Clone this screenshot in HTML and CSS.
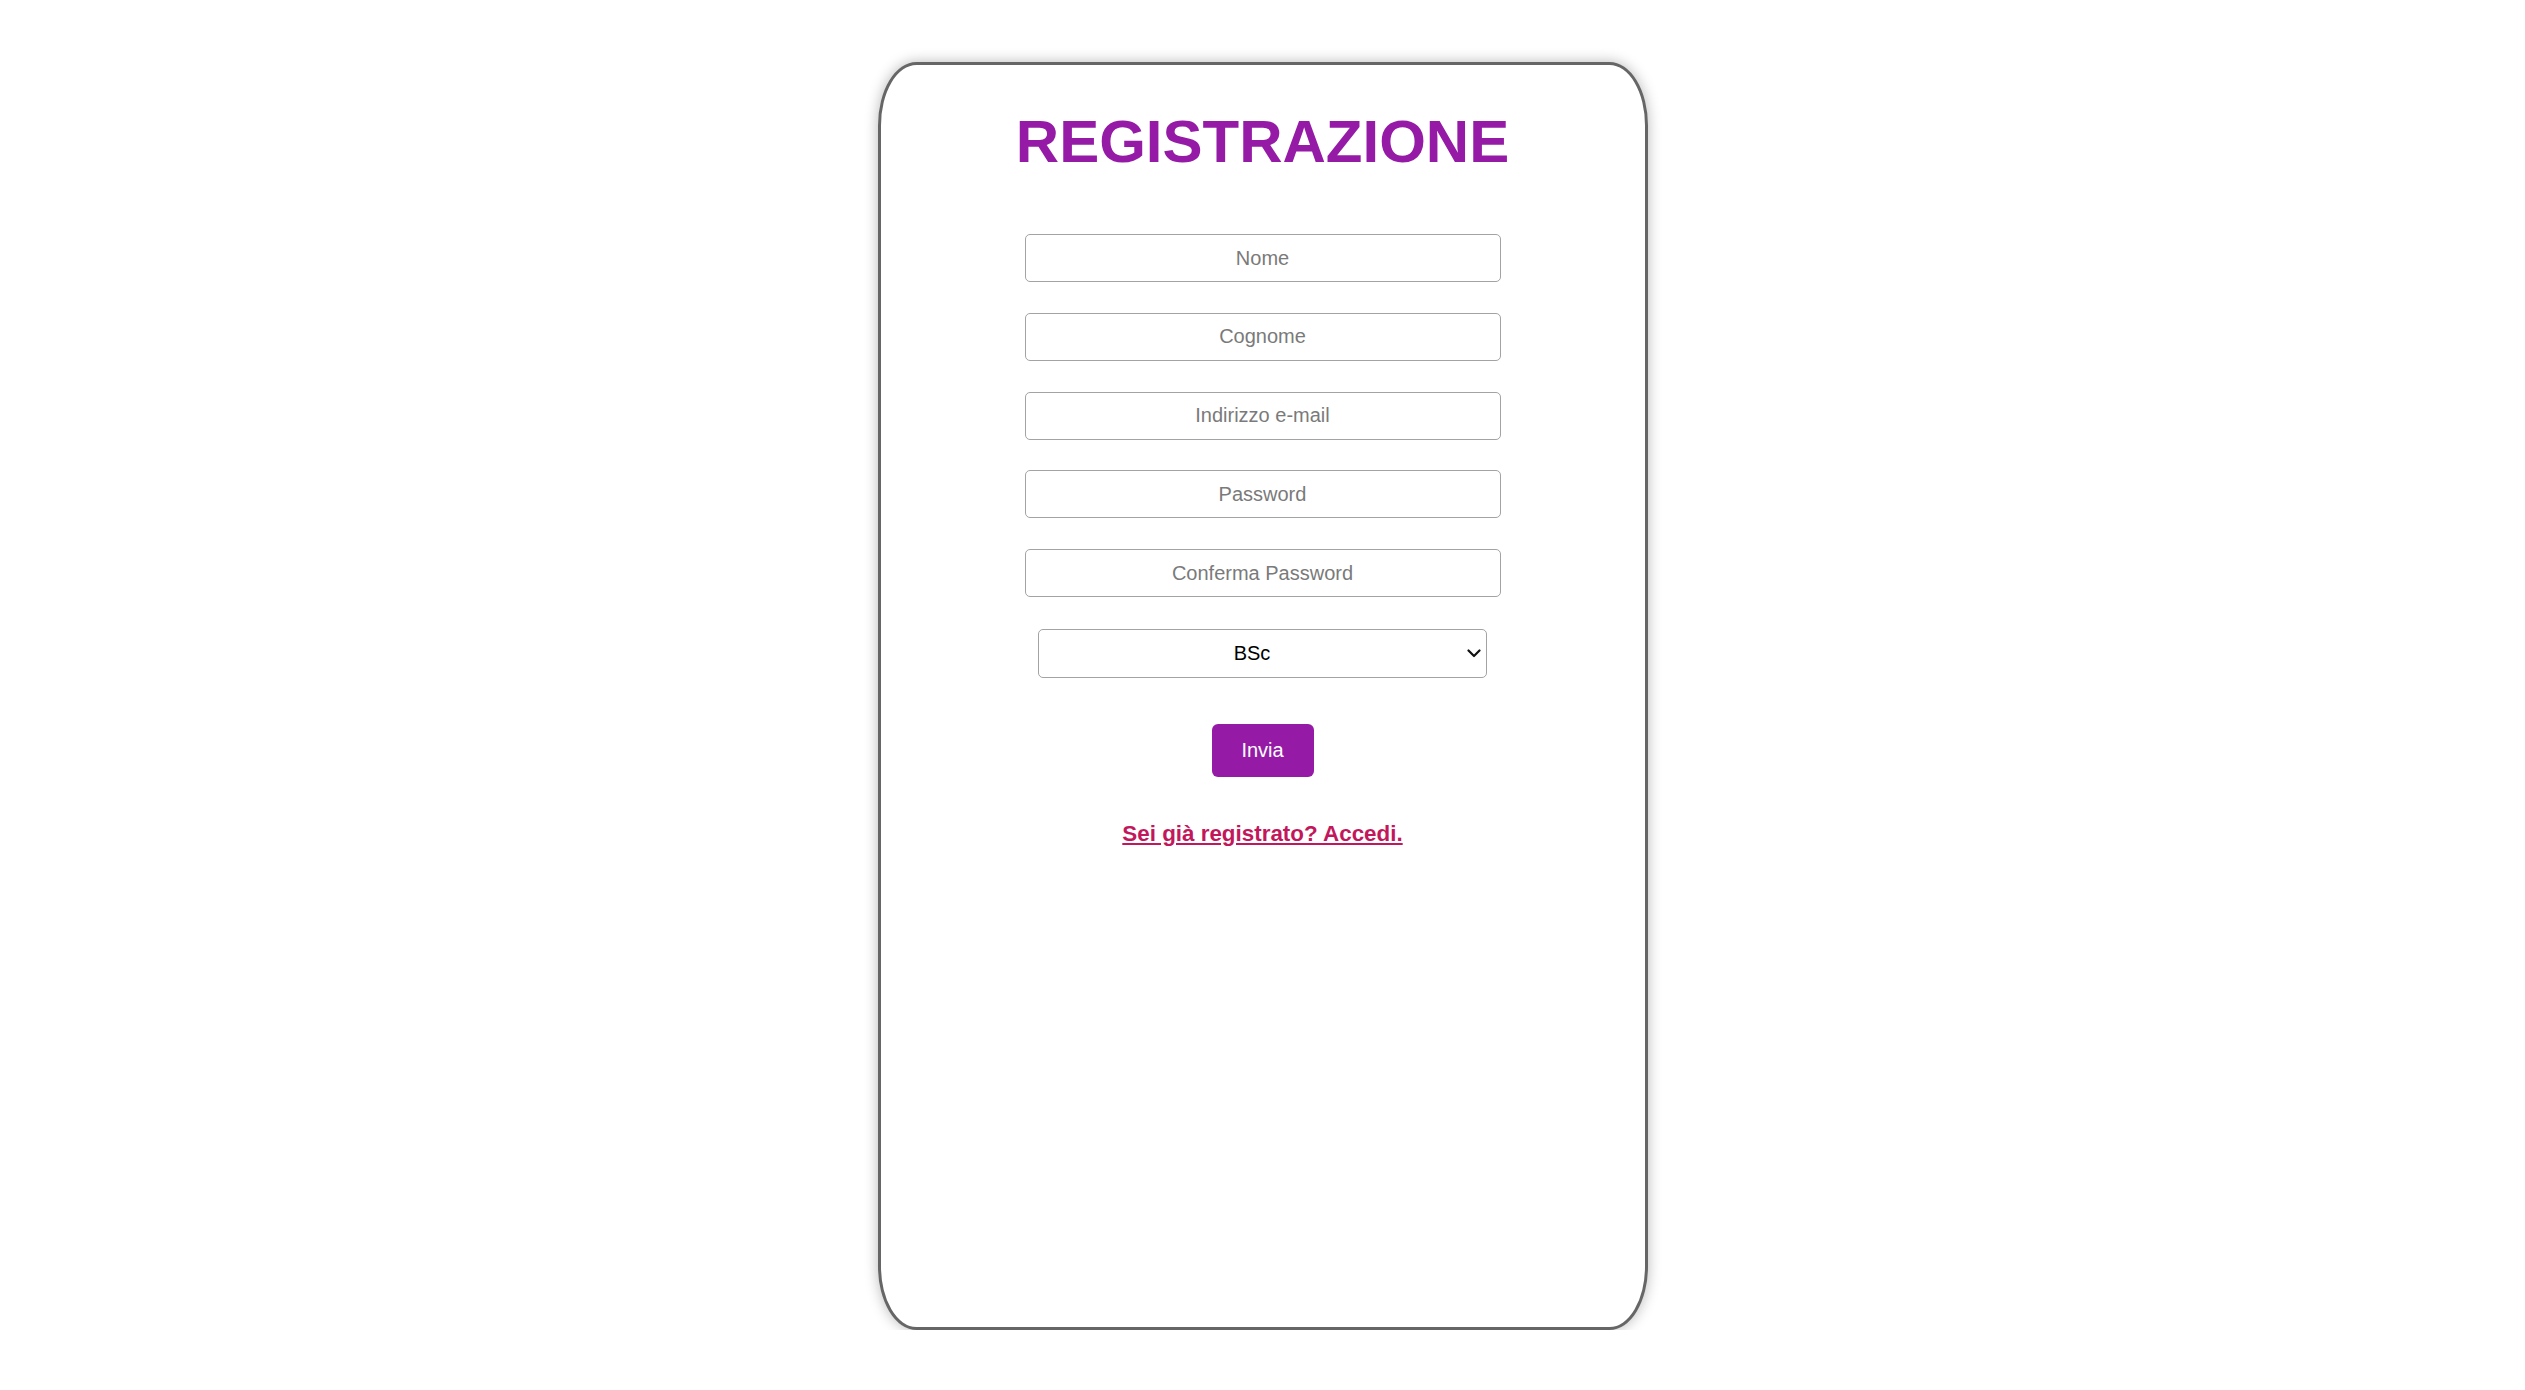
FILE: index.html
```html
<!DOCTYPE html>
<html lang="it">
<head>
<meta charset="utf-8">
<title>Registrazione</title>
<link rel="stylesheet" href="styles.css">
</head>
<body>
<main class="card">
  <h1 class="title">REGISTRAZIONE</h1>
  <form class="form">
    <input class="field" type="text" placeholder="Nome">
    <input class="field" type="text" placeholder="Cognome">
    <input class="field" type="email" placeholder="Indirizzo e-mail">
    <input class="field" type="password" placeholder="Password">
    <input class="field" type="password" placeholder="Conferma Password">
    <div class="choice-wrap">
      <select class="choice">
        <option>BSc</option>
        <option>MSc</option>
        <option>PhD</option>
      </select>
      <svg class="chevron" width="14" height="9" viewBox="0 0 14 9" aria-hidden="true">
        <path d="M1.5 1.5 L7 7 L12.5 1.5" fill="none" stroke="#111" stroke-width="2.2" stroke-linecap="round" stroke-linejoin="round"/>
      </svg>
    </div>
    <button class="submit" type="button">Invia</button>
    <a class="login" href="#">Sei già registrato? Accedi.</a>
  </form>
</main>
</body>
</html>
```

FILE: styles.css
```css
html, body {
  margin: 0;
  padding: 0;
  background: #ffffff;
  font-family: "Liberation Sans", Arial, sans-serif;
}

body {
  padding-top: 62px;
}

.card {
  box-sizing: border-box;
  width: 770px;
  height: 1268px;
  margin: 0 auto;
  border: 3px solid #666666;
  border-radius: 5%;
  box-shadow: 0 0 14px rgba(0, 0, 0, 0.28);
  background: #ffffff;
  padding-top: 47px;
  display: flex;
  flex-direction: column;
  align-items: center;
}

.title {
  margin: 0;
  font-size: 60px;
  line-height: 60px;
  font-weight: bold;
  color: #951ba7;
  text-align: center;
}

.form {
  margin-top: 62px;
  display: flex;
  flex-direction: column;
  align-items: center;
}

.field {
  box-sizing: border-box;
  width: 476px;
  height: 48px;
  margin: 0 0 30.75px 0;
  border: 1px solid #a3a3a3;
  border-radius: 5px;
  font-family: "Liberation Sans", Arial, sans-serif;
  font-size: 20px;
  text-align: center;
  color: #222222;
  background: #ffffff;
  outline: none;
}

.field::placeholder {
  color: #7a7a7a;
}

.choice-wrap {
  position: relative;
  width: 449px;
  height: 49px;
  margin-top: 1px;
}

.choice {
  appearance: none;
  -webkit-appearance: none;
  box-sizing: border-box;
  width: 100%;
  height: 100%;
  margin: 0;
  padding: 0 21px 0 0;
  border: 1px solid #a3a3a3;
  border-radius: 5px;
  font-family: "Liberation Sans", Arial, sans-serif;
  font-size: 20px;
  font-weight: normal;
  text-align: center;
  text-align-last: center;
  color: #000000;
  background-color: #ffffff;
}

.chevron {
  position: absolute;
  right: 6px;
  top: 20px;
  pointer-events: none;
}

.submit {
  box-sizing: border-box;
  margin-top: 46px;
  width: 102px;
  height: 53px;
  border: none;
  border-radius: 6px;
  background: #951ba7;
  color: #ffffff;
  font-family: "Liberation Sans", Arial, sans-serif;
  font-size: 20px;
  cursor: pointer;
}

.login {
  margin-top: 44px;
  font-size: 22.4px;
  font-weight: bold;
  color: #c2185b;
  text-decoration: underline;
}
```
